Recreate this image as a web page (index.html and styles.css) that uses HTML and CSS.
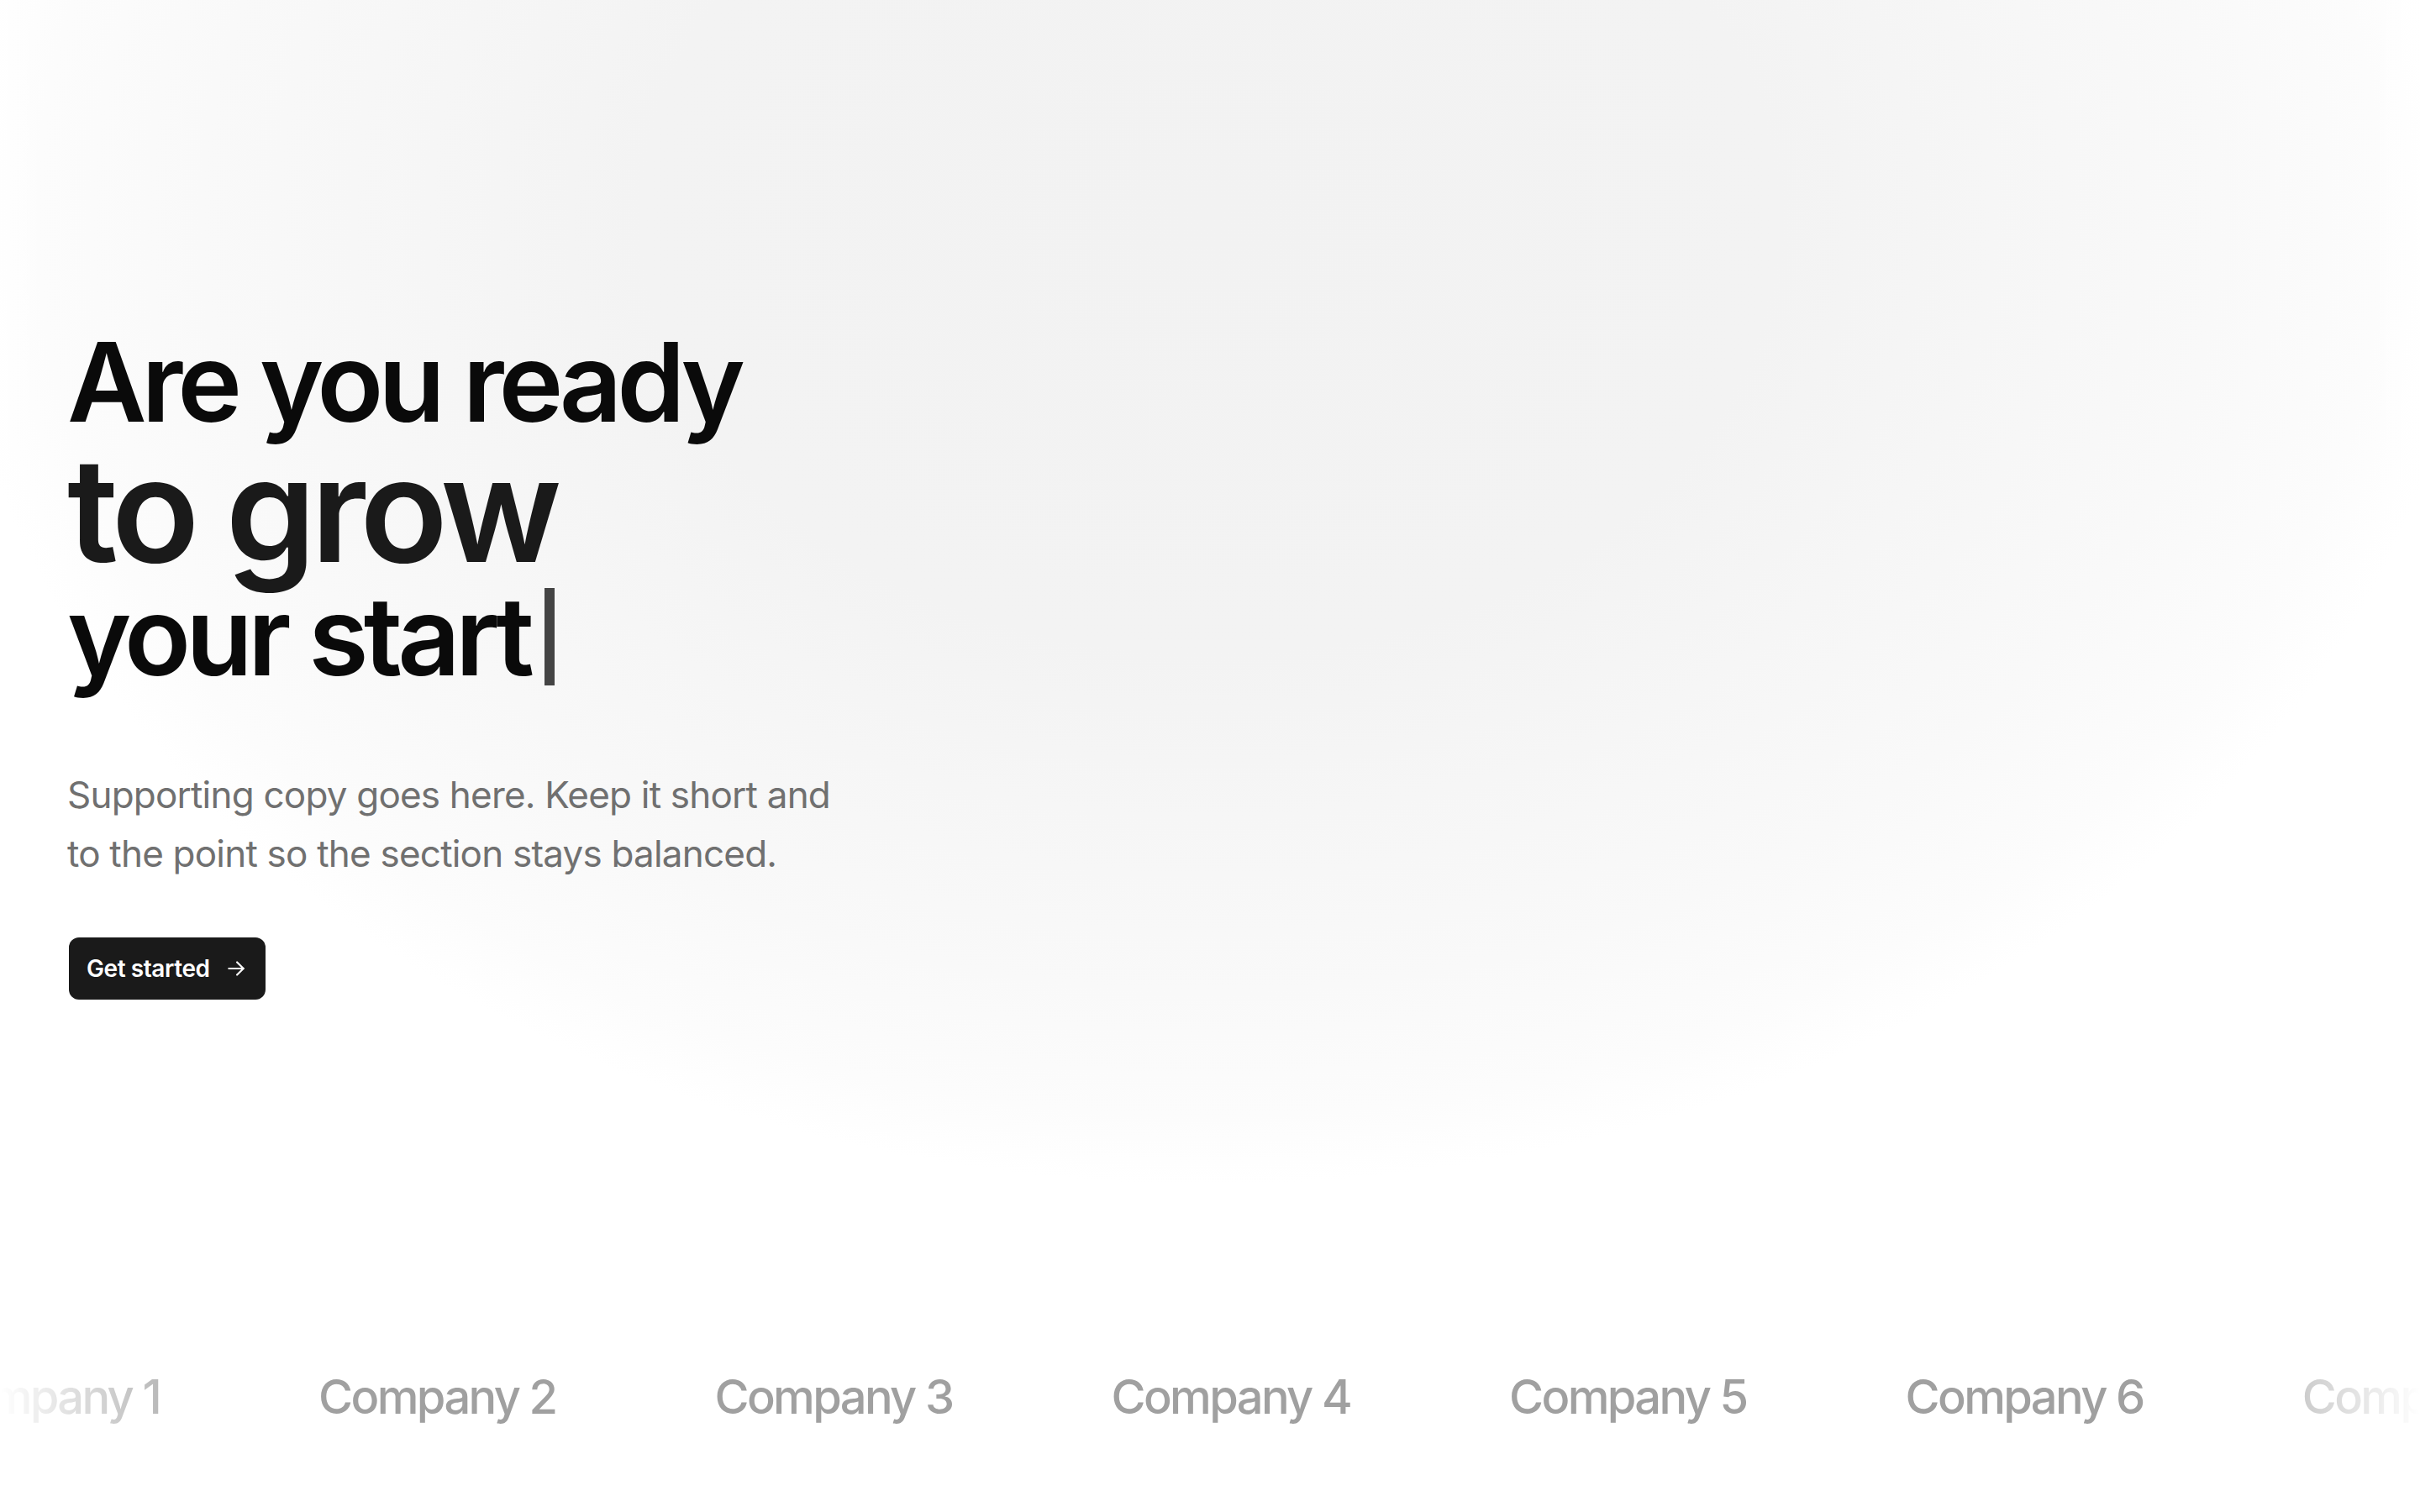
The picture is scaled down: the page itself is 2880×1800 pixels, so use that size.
FILE: index.html
```html
<!DOCTYPE html>
<html lang="en">
  <head>
    <meta charset="UTF-8" />
    <meta name="viewport" content="width=device-width, initial-scale=1.0" />
    <title>Grow your start</title>
    <link rel="stylesheet" href="styles.css">
  </head>
  <body>
    <section class="hero">
      <div class="hero-content">
        <h1 class="headline">
          <span class="line">Are you ready</span>
          <span class="line line-big">to grow</span>
          <span class="line">your start<span class="caret"></span></span>
        </h1>
        <p class="lead">
          Supporting copy goes here. Keep it short and to the point so the
          section stays balanced.
        </p>
        <a href="#" class="btn">
          Get started
          <svg class="btn-arrow" viewBox="0 0 24 24" fill="none" stroke="currentColor" stroke-width="2" stroke-linecap="round" stroke-linejoin="round">
            <path d="M4 12h16" />
            <path d="M13 5l7 7-7 7" />
          </svg>
        </a>
      </div>
    </section>

    <div class="logos">
      <div class="logos-track">
        <span class="logo">Company 1</span>
        <span class="logo">Company 2</span>
        <span class="logo">Company 3</span>
        <span class="logo">Company 4</span>
        <span class="logo">Company 5</span>
        <span class="logo">Company 6</span>
        <span class="logo" aria-hidden="true">Company 1</span>
        <span class="logo" aria-hidden="true">Company 2</span>
        <span class="logo" aria-hidden="true">Company 3</span>
      </div>
    </div>
  </body>
</html>
```

FILE: styles.css
```css
* {
  box-sizing: border-box;
}

body {
  margin: 0;
  background: #fff;
  font-family: Inter, "Noto Sans", sans-serif;
  color: #0a0a0a;
  overflow: hidden;
}

.hero {
  height: 1580px;
  display: flex;
  flex-direction: column;
  justify-content: center;
  padding: 0 80px;
  background:
    linear-gradient(to right, rgba(255, 255, 255, 0.6), transparent 60px, transparent calc(100% - 60px), rgba(255, 255, 255, 0.8)),
    radial-gradient(
      ellipse 1500px 1150px at 50% 260px,
      #f2f2f2 0%,
      #f3f3f3 45%,
      #f6f6f6 62%,
      #f9f9f9 80%,
      #fcfcfc 93%,
      #fff 100%
    );
}

.headline {
  margin: 0;
  font-weight: 600;
  font-size: 130px;
  line-height: 1;
  letter-spacing: -0.046em;
}

.headline .line {
  display: block;
}

.headline .line-big {
  font-size: 172px;
  color: #1a1a1a;
  letter-spacing: -0.036em;
}

.caret {
  display: inline-block;
  width: 12px;
  height: 116px;
  margin-left: 18px;
  vertical-align: -12px;
  background: #444;
}

.lead {
  margin: 89px 0 0;
  max-width: 930px;
  font-size: 44px;
  line-height: 70px;
  color: #707070;
  letter-spacing: -0.018em;
}

.btn {
  align-self: flex-start;
  display: inline-flex;
  align-items: center;
  gap: 18px;
  margin-top: 65px;
  margin-left: 2px;
  padding: 18px 22px 18px 21px;
  border-radius: 12px;
  background: #1a1a1a;
  color: #fff;
  font-size: 28px;
  font-weight: 600;
  line-height: 38px;
  letter-spacing: -0.015em;
  text-decoration: none;
}

.btn-arrow {
  width: 26px;
  height: 26px;
}

.logos {
  padding-top: 50px;
  overflow: hidden;
  -webkit-mask-image: linear-gradient(to right, transparent, #000 260px, #000 calc(100% - 260px), transparent);
  mask-image: linear-gradient(to right, transparent, #000 260px, #000 calc(100% - 260px), transparent);
}

.logos-track {
  display: flex;
  gap: 189px;
  width: max-content;
  transform: translateX(-81px);
}

.logo {
  font-size: 56px;
  font-weight: 500;
  line-height: 1.2;
  color: #a0a0a0;
  letter-spacing: -0.047em;
  white-space: nowrap;
}
```
